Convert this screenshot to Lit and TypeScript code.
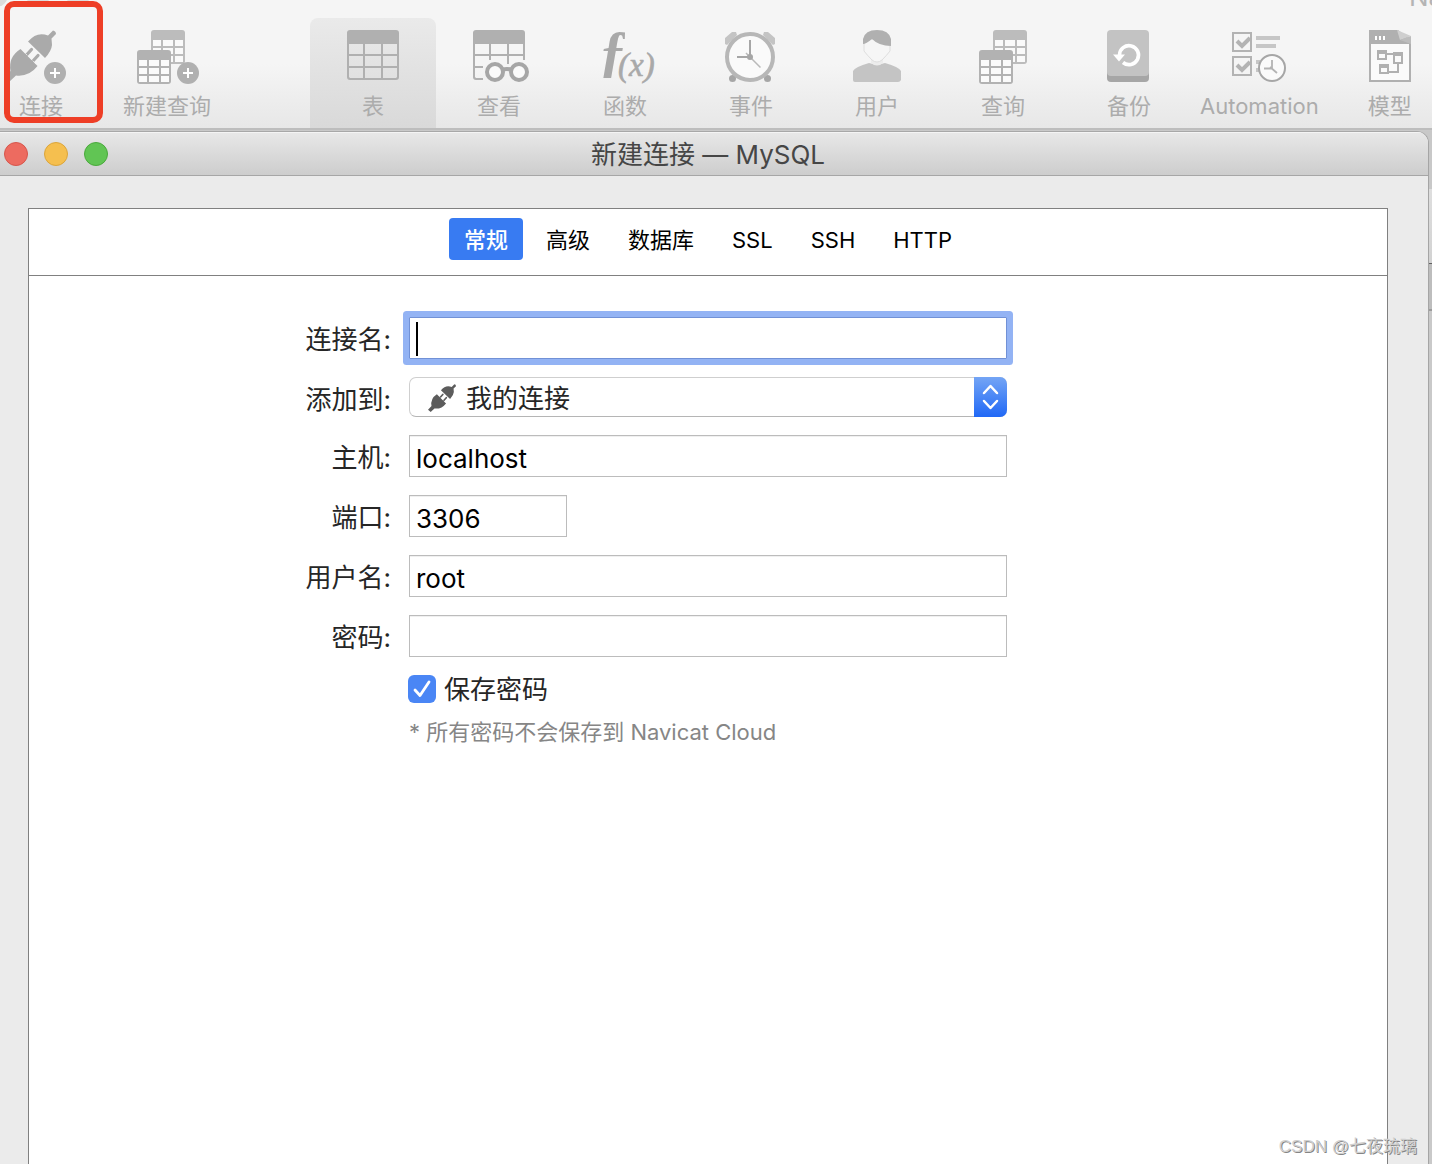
import { LitElement, html, css, svg, nothing } from "lit";
import { customElement, state } from "lit/decorators.js";
import { classMap } from "lit/directives/class-map.js";

/* Small grid used by the query icons: 34x34 with a 10px header band. */
const miniTable = (x: number, y: number, fill: string) => svg`
  <g transform="translate(${x} ${y})">
    <rect width="34" height="34" rx="3" fill=${fill} />
    ${[10, 18, 26].map(
      (cy) => svg`
        <rect x="2" y=${cy} width="8" height="6" fill="#fafafa" />
        <rect x="12" y=${cy} width="10" height="6" fill="#fafafa" />
        <rect x="24" y=${cy} width="8" height="6" fill="#fafafa" />`
    )}
  </g>`;

/* Large grid used by the table and view icons. */
const bigTable = svg`
  <path fill="#b0b0b0" fill-rule="evenodd"
    d="M13 4h46a3 3 0 0 1 3 3v44a3 3 0 0 1-3 3H13a3 3 0 0 1-3-3V7a3 3 0 0 1 3-3z
       M12 18v10h14V18z M28 18v10h16V18z M46 18v10h14V18z
       M12 30v10h14V30z M28 30v10h16V30z M46 30v10h14V30z
       M12 42v9l1 1h13V42z M28 42v10h16V42z M46 42v10h13l1-1v-9z" />`;

const plus = (cx: number, cy: number) => svg`
  <circle cx=${cx} cy=${cy} r="11" fill="#b0b0b0" />
  <path d="M${cx - 5} ${cy}h10M${cx} ${cy - 5}v10" stroke="#fff" stroke-width="2" />`;

const plug = (color: string) => svg`
  <g fill=${color}>
    <path d="M23 15.500L40 32Q46.500 25 47 19L46.500 12.500L51 8Q51 5 48 4.500L43 9.500Q32 5 23 15.500z" />
    <path d="M15.500 23L32.500 40Q24 51 11 49.500L4 56L-1 52L5.500 45Q3 31 15.500 23z" />
  </g>
  <path d="M21 29.500L26.500 23.500M27.500 35.500L33 29.500" stroke=${color} stroke-width="3.200" stroke-linecap="round" />
  <path d="M17.500 24.500L31 38" stroke="#f2f2f2" stroke-width=".8" stroke-dasharray="1.500 1" />`;

const check = (y: number) => svg`
  <rect x="9" y=${y + 1} width="18" height="18" fill="none" stroke="#b3b3b3" stroke-width="2" />
  <path d="M13 ${y + 9}l5 5 8-8" fill="none" stroke="#b3b3b3" stroke-width="4" />`;

const icons: Record<string, unknown> = {
  connect: svg`${plug("#aaaaaa")}${plus(50, 47)}`,
  newQuery: svg`${miniTable(20, 4, "#bcbcbc")}${miniTable(6, 24, "#b2b2b2")}${plus(57, 47)}`,
  table: bigTable,
  view: svg`
    <mask id="glasses-gap">
      <rect width="72" height="60" fill="#fff" />
      <path d="M20 60V39l4-5h40v26z" fill="#000" />
      <path d="M12 18h14v16H12zM24 30h4v4h-4zM44 30h2v8h-2z" fill="#fff" />
    </mask>
    <g mask="url(#glasses-gap)">${bigTable}</g>
    <g fill="#fafafa" stroke="#a6a6a6" stroke-width="4">
      <path d="M39 44q5-2 10 0" fill="none" />
      <circle cx="32" cy="46" r="8" /><circle cx="56" cy="46" r="8" />
    </g>`,
  func: svg`
    <g fill="#a9a9a9" font-family="'Liberation Serif', serif" font-style="italic">
      <text x="10" y="44" font-size="56" font-weight="700">ƒ</text>
      <text x="29" y="50" font-size="33" stroke="#a9a9a9" stroke-width=".6">(x)</text>
    </g>`,
  event: svg`
    <path d="M10 18v-6l7-6h4l1 3-10 10zM60 18v-6l-7-6h-4l-1 3 10 10z" fill="#c4c4c4" />
    <circle cx="17.500" cy="52.500" r="3.500" fill="#a6a6a6" /><circle cx="52.500" cy="52.500" r="3.500" fill="#a6a6a6" />
    <circle cx="35" cy="31" r="23" fill="#fafafa" stroke="#b7b7b7" stroke-width="4" />
    <path d="M35 31V14M35 31H22" stroke="#a6a6a6" stroke-width="2" />
    <path d="M31 27l14.500 14.500" stroke="#b9b9b9" stroke-width="1.500" />
    <circle cx="35" cy="31" r="3" fill="#a6a6a6" />`,
  user: svg`
    <path d="M12 54V45Q14 41 28 37l8 2 8-2q14 4 16 8v9q-1 2-3 2H14q-2 0-2-2z" fill="#c4c4c4" />
    <path d="M30 32v5q6 5 12 0v-5z" fill="#ececec" />
    <path d="M23 15q12-6 26 5v5q-3 4-8 9-5 4-10 0-5-5-8-9z" fill="#f6f6f6" stroke="#dedede" stroke-width="1" />
    <path d="M22 18V13q2-9 14-9t14 9v7q-12 0-19-7-6 5-9 5z" fill="#b0b0b0" />`,
  query: svg`${miniTable(26, 4, "#bcbcbc")}${miniTable(12, 24, "#b2b2b2")}`,
  backup: svg`
    <rect x="14" y="20" width="42" height="36" rx="4" fill="#a6a6a6" />
    <rect x="14" y="4" width="42" height="46" rx="4" fill="#c3c3c3" />
    <path d="M26.500 29A9.500 9.500 0 1 1 30 36.500" fill="none" stroke="#fff" stroke-width="3.600" />
    <path d="M20 28.500h12l-6 7z" fill="#fff" />`,
  automation: svg`
    <g transform="translate(1 0)">
      ${check(6)}${check(30)}
      <path d="M32 10h24v4H32zM32 18h20v4H32zM32 34h4v4h-4zM32 42h3v4h-3z" fill="#c6c6c6" />
      <circle cx="48" cy="42" r="13" fill="#fafafa" stroke="#a6a6a6" stroke-width="2" />
      <path d="M48 34v9M40 42.500h8M46 41l7 6" stroke="#b3b3b3" stroke-width="1.800" />
    </g>`,
  model: svg`
    <g transform="translate(1 0)">
      <path d="M14 4h29l13 10v42H14z" fill="#b0b0b0" />
      <path d="M16 18h38v36H16z" fill="#fafafa" />
      <path d="M42 4l14 6-11 4z" fill="#cfcfcf" />
      <path d="M45 14l11-4v8z" fill="#bdbdbd" />
      <path d="M20 10h2v4h-2zM24 10h2v4h-2zM28 10h2v4h-2z" fill="#fff" />
      <g fill="none" stroke="#b0b0b0" stroke-width="2">
        <path d="M32 28h7M43 38v8h-9" />
        <rect x="23" y="25" width="8" height="8" /><path d="M22 26h10" stroke-width="4" />
        <rect x="39" y="27" width="8" height="10" /><path d="M38 28h10" stroke-width="4" />
        <rect x="25" y="39" width="8" height="8" /><path d="M24 40h10" stroke-width="4" />
      </g>
    </g>`,
};

interface Tool { icon: string; label: string; }

const leading: Tool[] = [
  { icon: "connect", label: "连接" },
  { icon: "newQuery", label: "新建查询" },
];

const objects: Tool[] = [
  { icon: "table", label: "表" },
  { icon: "view", label: "查看" },
  { icon: "func", label: "函数" },
  { icon: "event", label: "事件" },
  { icon: "user", label: "用户" },
  { icon: "query", label: "查询" },
  { icon: "backup", label: "备份" },
  { icon: "automation", label: "Automation" },
  { icon: "model", label: "模型" },
];

@customElement("main-toolbar")
export class MainToolbar extends LitElement {
  static styles = css`
    :host {
      display: block;
      position: relative;
      overflow: hidden;
      background: linear-gradient(#f5f5f5 50%, #e7e7e7);
      border-bottom: 2px solid #bdbdbd;
    }
    .bar {
      display: flex;
      padding-top: 18px;
      margin-left: -22px;
    }
    .group { display: flex; flex: none; }
    .group + .group { margin-left: 80px; }
    .tool {
      display: flex;
      flex-direction: column;
      align-items: center;
      gap: 7px;
      flex: none;
      min-width: 126px;
      height: 110px;
      padding: 8px 8px 0;
      border: 0;
      border-radius: 8px 8px 0 0;
      background: none;
      color: #acacac;
      font: 22px/26px Inter, "Noto Sans CJK SC", sans-serif;
    }
    .active { background: linear-gradient(#eaeaea, #d9d9d9); }
    .icon { display: block; width: 72px; height: 60px; overflow: visible; }
    .ghost {
      position: absolute;
      top: -17px;
      width: 24px;
      height: 24px;
      border-radius: 50%;
      background: #dcdcdc;
    }
    .g1 { left: -16px; }
    .g2 { left: 26px; }
    .g3 { left: 66px; }
    .app-name {
      position: absolute;
      left: 1409px;
      top: -18px;
      color: #b4b4b4;
      font: 26px/30px Inter, sans-serif;
    }
    .highlight {
      position: absolute;
      left: 4px;
      top: 1px;
      width: 99px;
      height: 122px;
      box-sizing: border-box;
      border: 6px solid #ee3e26;
      border-radius: 10px;
    }
  `;

  private tool(t: Tool) {
    return html`
      <button class=${classMap({ tool: true, active: t.icon === "table" })} type="button">
        <svg class="icon" viewBox="0 0 72 60" aria-hidden="true">${icons[t.icon]}</svg>
        <span>${t.label}</span>
      </button>`;
  }

  render() {
    return html`
      <i class="ghost g1"></i><i class="ghost g2"></i><i class="ghost g3"></i>
      <span class="app-name">Na</span>
      <nav class="bar">
        <div class="group">${leading.map((t) => this.tool(t))}</div>
        <div class="group">${objects.map((t) => this.tool(t))}</div>
      </nav>
      <div class="highlight"></div>`;
  }
}

interface Field { id: string; label: string; value: string; type?: string; short?: boolean; focused?: boolean; }

const nameField: Field = { id: "name", label: "连接名:", value: "", focused: true };
const fields: Field[] = [
  { id: "host", label: "主机:", value: "localhost" },
  { id: "port", label: "端口:", value: "3306", short: true },
  { id: "user", label: "用户名:", value: "root" },
  { id: "password", label: "密码:", value: "", type: "password" },
];

@customElement("connection-form")
export class ConnectionForm extends LitElement {
  static styles = css`
    :host { display: block; }
    .form {
      display: grid;
      grid-template-columns: 1fr minmax(0, 598px) 1fr;
      row-gap: 18px;
      padding: 41px 0 32px;
      color: #262626;
      font: 26px/36px Inter, "Noto Sans CJK SC", sans-serif;
    }
    .label { grid-column: 1; text-align: right; line-height: 34px; padding: 6px 18px 0 0; }
    .cell { grid-column: 2; position: relative; display: flex; }
    .input {
      box-sizing: border-box;
      width: 100%;
      height: 42px;
      margin: 0;
      padding: 4px 6px 0;
      border: 1px solid #bcbcbc;
      border-radius: 0;
      outline: none;
      background: #fff;
      box-shadow: inset 0 1px #f0f0f0;
      color: #000;
      font: inherit;
    }
    .short { width: 158px; }
    .focused {
      border-color: #7191d6;
      box-shadow: 0 0 0 6px #93b3f4;
      border-radius: 1px;
      caret-color: transparent;
    }
    .caret { position: absolute; left: 7px; top: 5px; width: 2px; height: 34px; background: #000; }
    .select {
      appearance: none;
      box-sizing: border-box;
      width: 100%;
      height: 40px;
      padding: 3px 44px 0 56px;
      border: 1px solid #cfcfcf;
      border-bottom-color: #b5b5b5;
      border-radius: 7px;
      background: #fff;
      color: #262626;
      font: inherit;
    }
    .plug { position: absolute; left: 19px; top: 7px; width: 28px; height: 28px; pointer-events: none; }
    .stepper {
      position: absolute;
      right: 0;
      top: 0;
      width: 33px;
      height: 40px;
      border-radius: 0 7px 7px 0;
      background: linear-gradient(#74a5f5, #2068f6);
      pointer-events: none;
    }
    .save { grid-column: 2; display: flex; flex-direction: column; gap: 16px; }
    .save-row { display: flex; align-items: center; gap: 8px; height: 28px; margin-left: -1px; }
    .box {
      appearance: none;
      flex: none;
      width: 28px;
      height: 28px;
      margin: 0;
      border-radius: 6px;
      background: #4a86f5;
    }
    .tick-wrap { position: relative; display: flex; }
    .tick { position: absolute; inset: 0; pointer-events: none; }
    .save-label { line-height: 28px; padding-top: 2px; }
    .note { margin: 0; color: #868686; font-size: 22px; line-height: 26px; }
  `;

  private field(f: Field) {
    return html`
      <label class="label" for=${f.id}>${f.label}</label>
      <div class="cell">
        <input
          class=${classMap({ input: true, short: !!f.short, focused: !!f.focused })}
          id=${f.id}
          type=${f.type ?? "text"}
          .value=${f.value}
        />
        ${f.focused ? html`<i class="caret"></i>` : nothing}
      </div>`;
  }

  render() {
    return html`
      <form class="form">
        ${this.field(nameField)}
        <label class="label" for="group">添加到:</label>
        <div class="cell">
          <select class="select" id="group"><option>我的连接</option></select>
          <svg class="plug" viewBox="-1 4 52 52" aria-hidden="true">${plug("#5c5c5c")}</svg>
          <svg class="stepper" viewBox="0 0 33 40" aria-hidden="true">
            <path d="M10 16l6.500-7 6.500 7M10 24l6.500 7 6.500-7" fill="none" stroke="#fff" stroke-width="2.500" stroke-linecap="round" stroke-linejoin="round" />
          </svg>
        </div>
        ${fields.map((f) => this.field(f))}
        <div class="save">
          <div class="save-row">
            <span class="tick-wrap">
              <input class="box" id="save" type="checkbox" checked />
              <svg class="tick" viewBox="0 0 28 28" aria-hidden="true">
                <path d="M7 15l5 5.500L21 7" fill="none" stroke="#fff" stroke-width="2.800" stroke-linecap="round" stroke-linejoin="round" />
              </svg>
            </span>
            <label class="save-label" for="save">保存密码</label>
          </div>
          <p class="note">* 所有密码不会保存到 Navicat Cloud</p>
        </div>
      </form>`;
  }
}

const tabs = ["常规", "高级", "数据库", "SSL", "SSH", "HTTP"];

@customElement("app-root")
export class AppRoot extends LitElement {
  static styles = css`
    :host {
      display: flex;
      flex-direction: column;
      position: relative;
      min-height: 100vh;
      overflow: hidden;
      background: #c9c9c9;
      font-family: Inter, "Noto Sans CJK SC", sans-serif;
    }
    .backdrop {
      position: absolute;
      right: 0;
      top: 131px;
      width: 20px;
      height: 180px;
      box-sizing: border-box;
      border-bottom: 2px solid #9c9c9c;
      background: linear-gradient(#c8c8c8 58px, #dedede 58px, #d2d2d2 132px, #606060 132px, #606060 133px, #bdbdbd 133px);
    }
    .window {
      position: relative;
      display: flex;
      flex-direction: column;
      flex: 1;
      margin: 1px 3px 0 0;
      border-right: 1px solid #a5a5a5;
      border-top: 1px solid #a8a8a8;
      border-radius: 0 12px 0 0;
      background: #ebebeb;
      overflow: hidden;
    }
    .titlebar {
      display: grid;
      grid-template-columns: 1fr auto 1fr;
      align-items: center;
      height: 43px;
      padding: 0 16px 0 4px;
      border-bottom: 1px solid #a6a6a6;
      background: linear-gradient(#e8e8e8, #cdcdcd);
      box-shadow: inset 0 1px #f4f4f4;
    }
    .lights { display: flex; gap: 16px; }
    .light { width: 24px; height: 24px; padding: 0; border: 1px solid; border-radius: 50%; }
    .close { background: #ed6b60; border-color: #d6564c; }
    .minimize { background: #f5bf4f; border-color: #dba53b; }
    .zoom { background: #61c554; border-color: #4aa93c; }
    .title { margin: 0; color: #464646; font-size: 26px; font-weight: 400; line-height: 40px; padding-top: 3px; }
    .panel {
      flex: 1;
      margin: 32px 40px 0 28px;
      border: 1px solid #808080;
      border-bottom: 0;
      background: #fff;
    }
    .tabs {
      display: flex;
      justify-content: center;
      gap: 8px;
      padding: 9px 0 15px;
      border-bottom: 1px solid #808080;
    }
    .tab {
      height: 42px;
      padding: 2px 15px 0;
      border: 0;
      border-radius: 4px;
      background: none;
      color: #000;
      font: 22px/40px Inter, "Noto Sans CJK SC", sans-serif;
    }
    .selected { background: #387bf2; color: #fff; font-weight: 500; }
    .watermark {
      position: absolute;
      right: 15px;
      bottom: 5px;
      color: #d0d0d0;
      font: 17px/24px "Liberation Sans", "Noto Sans CJK SC", sans-serif;
      text-shadow: 1px 1px #858585;
    }
  `;

  @state() private tab = 0;

  render() {
    return html`
      <main-toolbar></main-toolbar>
      <div class="backdrop"></div>
      <main class="window">
        <header class="titlebar">
          <div class="lights">
            <button class="light close" type="button" aria-label="关闭"></button>
            <button class="light minimize" type="button" aria-label="最小化"></button>
            <button class="light zoom" type="button" aria-label="缩放"></button>
          </div>
          <h1 class="title">新建连接 — MySQL</h1>
        </header>
        <section class="panel">
          <div class="tabs" role="tablist">
            ${tabs.map(
              (t, i) => html`<button
                class=${classMap({ tab: true, selected: i === this.tab })}
                type="button"
                role="tab"
                aria-selected=${i === this.tab}
                @click=${() => (this.tab = i)}
              >${t}</button>`
            )}
          </div>
          <connection-form></connection-form>
        </section>
      </main>
      <div class="watermark">CSDN @七夜琉璃</div>`;
  }
}
